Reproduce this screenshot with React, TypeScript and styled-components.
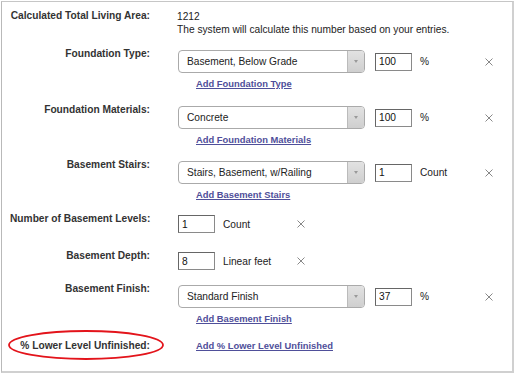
import styled, { createGlobalStyle } from 'styled-components';

const GlobalStyle = createGlobalStyle`
  html, body { margin: 0; padding: 0; background: #fff; }
  body { font-family: "Liberation Sans", Arial, sans-serif; }
`;

const Frame = styled.div`
  position: relative;
  box-sizing: border-box;
  margin: 1px 0 0 1px;
  width: 513px;
  height: 372px;
  border-left: 1px solid #b9b9b9;
  border-top: 1px solid #c6c6c6;
  border-right: 2px solid #d0d0d0;
  border-bottom: 2px solid #d0d0d0;
  padding: 7px 0 0 8px;
`;

const Row = styled.div<{ $h: number }>`
  display: grid;
  grid-template-columns: 140px 1fr;
  column-gap: 27px;
  align-items: start;
  height: ${p => p.$h}px;
`;

const Label = styled.div`
  position: relative;
  font-size: 10.2px;
  line-height: 14px;
  font-weight: bold;
  color: #333;
  text-align: right;
  white-space: nowrap;
`;

const Value = styled.div<{ $pt: number }>`
  padding-top: ${p => p.$pt}px;
  font-size: 10.2px;
  line-height: 13px;
  color: #222;
`;

const Line = styled.div`
  display: flex;
  align-items: center;
  padding-left: 1px;
`;

const SelectBox = styled.div`
  box-sizing: border-box;
  width: 187px;
  height: 23px;
  border: 1px solid #aaa;
  border-radius: 4px;
  display: flex;
  background: #fff;
`;

const SelectText = styled.span`
  flex: 1;
  padding-left: 8px;
  line-height: 21px;
  font-size: 10.2px;
  color: #222;
`;

const Arrow = styled.span`
  width: 16px;
  border-left: 1px solid #bbb;
  border-radius: 0 3px 3px 0;
  background: linear-gradient(#e2e2e2, #cfcfcf);
  display: flex;
  align-items: center;
  justify-content: center;

  &::after {
    content: '';
    border-left: 2.5px solid transparent;
    border-right: 2.5px solid transparent;
    border-top: 3px solid #999;
  }
`;

const Qty = styled.input<{ $ml: number }>`
  box-sizing: border-box;
  width: 37px;
  height: 18px;
  margin: 0 0 0 ${p => p.$ml}px;
  padding: 0 0 0 3px;
  border: 1px solid #8a8a8a;
  border-top-color: #666;
  border-left-color: #666;
  font: 10.2px "Liberation Sans", Arial, sans-serif;
  color: #111;
  outline: none;
`;

const Unit = styled.span<{ $w: number }>`
  width: ${p => p.$w}px;
  margin-left: 8px;
  font-size: 10.2px;
  color: #222;
`;

const Remove = styled.svg`
  display: block;
  width: 8px;
  height: 8px;
`;

const AddLink = styled.a<{ $mt: number }>`
  display: inline-block;
  margin: ${p => p.$mt}px 0 0 19px;
  font-size: 9.4px;
  line-height: 14px;
  font-weight: bold;
  color: #4f4f9a;
  text-decoration: underline;
  cursor: pointer;
`;

const Circle = styled.svg`
  position: absolute;
  left: -2px;
  top: -9px;
  width: 156px;
  height: 30px;
  overflow: visible;
`;

function XIcon() {
  return (
    <Remove viewBox="0 0 8 8">
      <path d="M0.5 0.5 L7.5 7.5 M7.5 0.5 L0.5 7.5" stroke="#888" strokeWidth="1" fill="none" />
    </Remove>
  );
}

type SelectRowProps = { h: number; label: string; option: string; qty: string; unit: string; link: string };

function SelectRow({ h, label, option, qty, unit, link }: SelectRowProps) {
  return (
    <Row $h={h}>
      <Label>{label}</Label>
      <Value $pt={3}>
        <Line>
          <SelectBox>
            <SelectText>{option}</SelectText>
            <Arrow />
          </SelectBox>
          <Qty $ml={10} defaultValue={qty} readOnly />
          <Unit $w={65}>{unit}</Unit>
          <XIcon />
        </Line>
        <AddLink $mt={4}>{link}</AddLink>
      </Value>
    </Row>
  );
}

type InputRowProps = { h: number; label: string; qty: string; unit: string };

function InputRow({ h, label, qty, unit }: InputRowProps) {
  return (
    <Row $h={h}>
      <Label>{label}</Label>
      <Value $pt={3}>
        <Line>
          <Qty $ml={0} defaultValue={qty} readOnly />
          <Unit $w={74}>{unit}</Unit>
          <XIcon />
        </Line>
      </Value>
    </Row>
  );
}

export default function App() {
  return (
    <>
      <GlobalStyle />
      <Frame>
        <Row $h={38}>
          <Label>Calculated Total Living Area:</Label>
          <Value $pt={1}>
            1212
            <br />
            The system will calculate this number based on your entries.
          </Value>
        </Row>
        <SelectRow h={56} label="Foundation Type:" option="Basement, Below Grade" qty="100" unit="%" link="Add Foundation Type" />
        <SelectRow h={55} label="Foundation Materials:" option="Concrete" qty="100" unit="%" link="Add Foundation Materials" />
        <SelectRow h={54} label="Basement Stairs:" option="Stairs, Basement, w/Railing" qty="1" unit="Count" link="Add Basement Stairs" />
        <InputRow h={37} label="Number of Basement Levels:" qty="1" unit="Count" />
        <InputRow h={33} label="Basement Depth:" qty="8" unit="Linear feet" />
        <SelectRow h={57} label="Basement Finish:" option="Standard Finish" qty="37" unit="%" link="Add Basement Finish" />
        <Row $h={30}>
          <Label>
            % Lower Level Unfinished:
            <Circle viewBox="0 0 156 30">
              <ellipse cx="78" cy="15" rx="77" ry="14" stroke="#e3141b" strokeWidth="1.8" fill="none" />
            </Circle>
          </Label>
          <Value $pt={0}>
            <AddLink $mt={0}>Add % Lower Level Unfinished</AddLink>
          </Value>
        </Row>
      </Frame>
    </>
  );
}
